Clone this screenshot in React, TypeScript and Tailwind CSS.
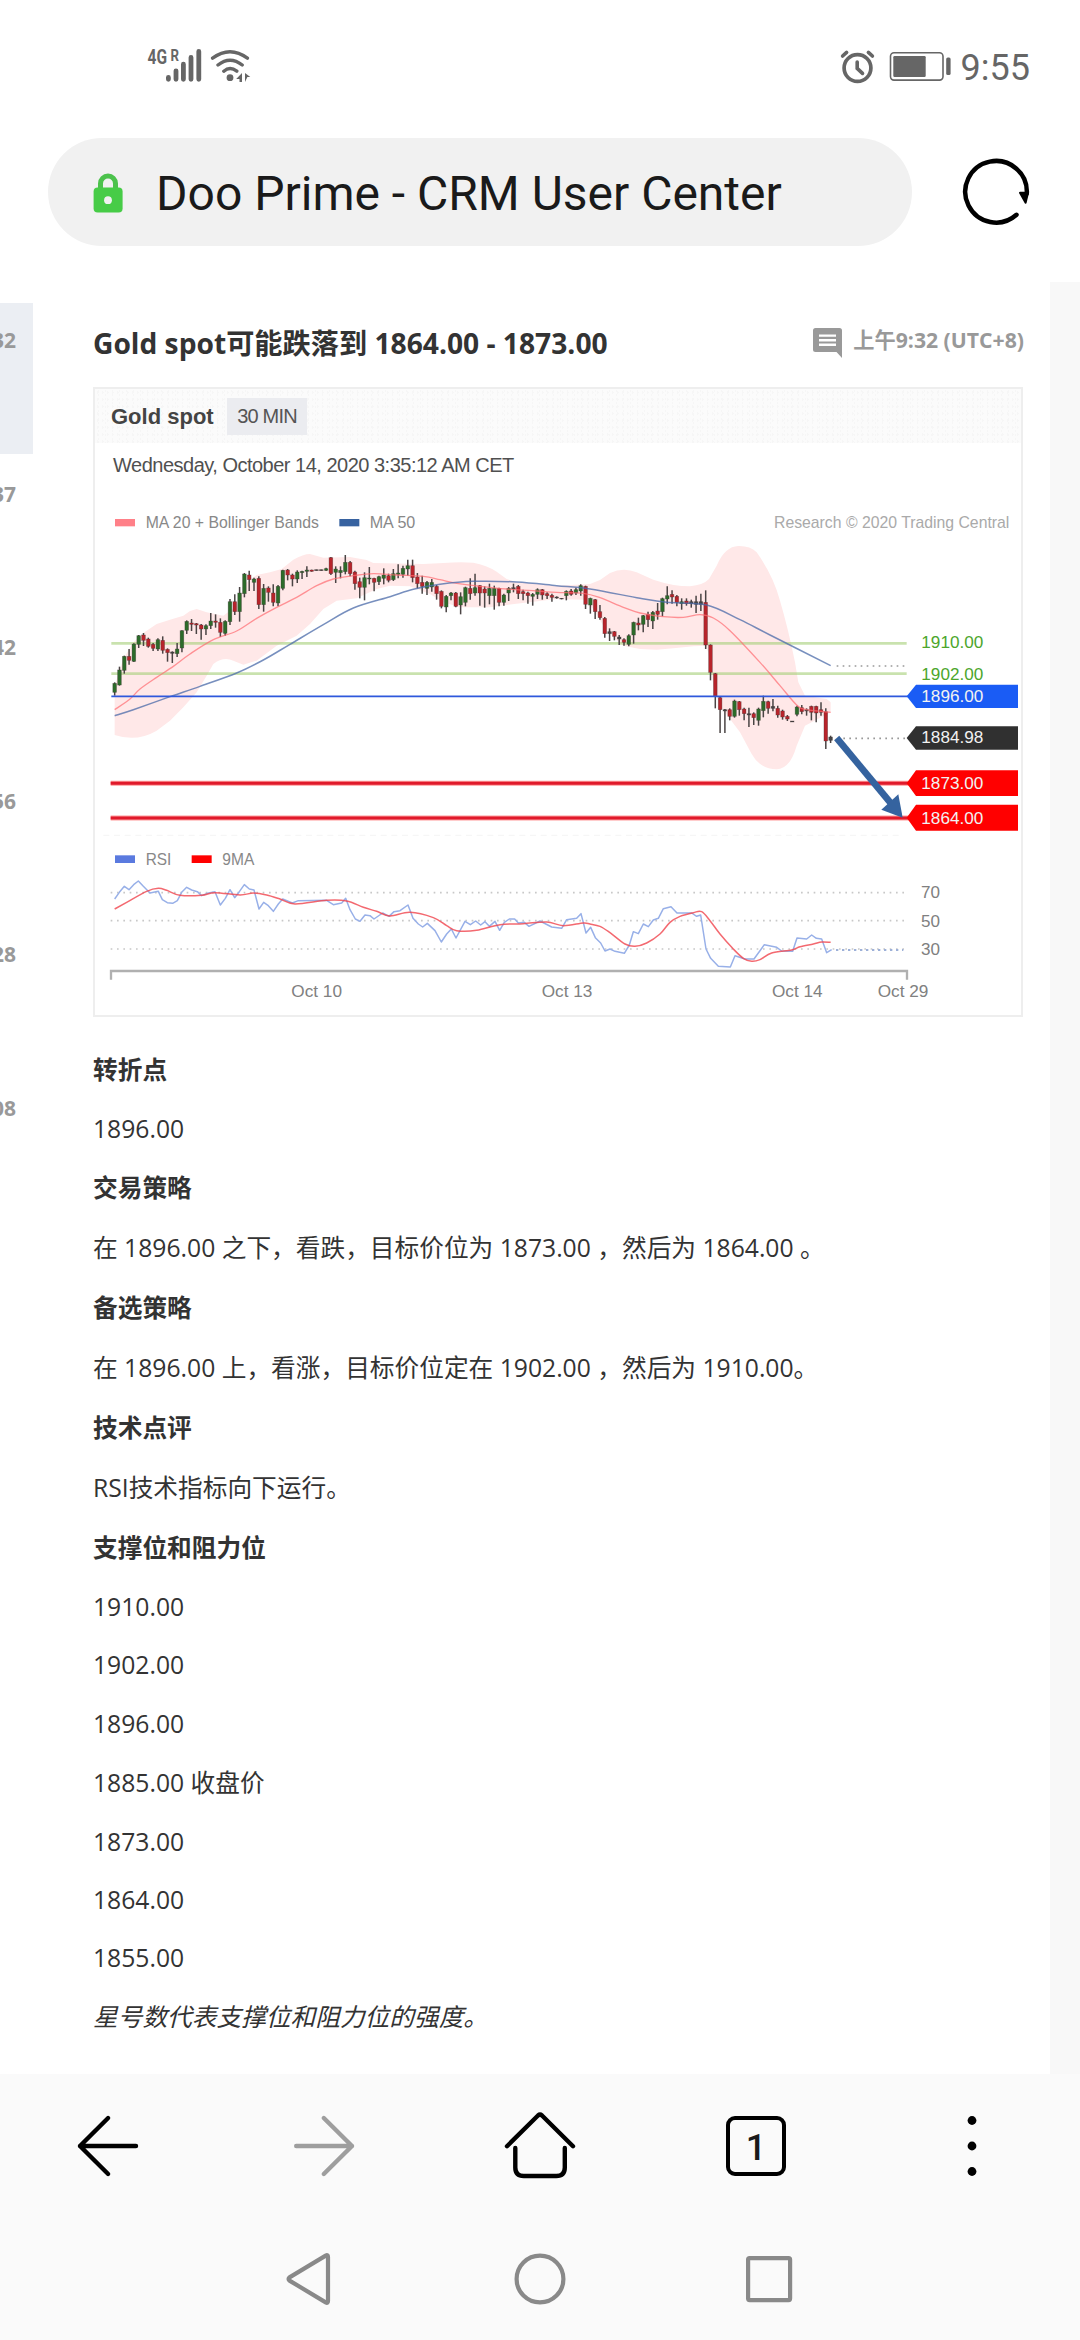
// NOTE: 行情分析ページ（モバイルブラウザ表示）

import clsx from "clsx";

type Candle = [high: number, top: number, bottom: number, low: number, type: string];
type Point = [x: number, y: number];

const CANDLE_STEP = 14.415;

// 30分足 [高値, 実体上, 実体下, 安値, 種別]
const candles: Candle[] = [
  [550, 553, 580, 590, "g"], [503, 513, 558, 560, "g"], [470, 472, 514, 524, "g"], [450, 472, 484, 497, "r"],
  [433, 435, 487, 489, "g"], [408, 410, 436, 447, "g"], [402, 408, 424, 441, "r"], [416, 420, 442, 446, "r"],
  [432, 436, 448, 456, "r"], [418, 422, 450, 456, "g"], [412, 424, 454, 464, "r"], [448, 451, 461, 488, "r"],
  [457, 459, 463, 492, "n"], [432, 450, 464, 474, "g"], [394, 395, 447, 460, "g"], [364, 367, 394, 405, "g"],
  [360, 372, 376, 396, "r"], [372, 374, 378, 405, "r"], [375, 378, 390, 422, "r"], [376, 380, 390, 408, "g"],
  [342, 366, 380, 390, "g"], [346, 366, 370, 386, "r"], [358, 370, 400, 414, "r"], [364, 367, 403, 410, "g"],
  [300, 308, 368, 378, "g"], [286, 308, 338, 348, "r"], [264, 282, 338, 368, "g"], [222, 225, 284, 295, "g"],
  [215, 228, 242, 276, "r"], [236, 240, 250, 276, "g"], [232, 238, 317, 330, "r"], [255, 268, 317, 338, "g"],
  [262, 267, 280, 308, "r"], [256, 282, 310, 322, "r"], [258, 262, 312, 322, "g"], [212, 214, 268, 274, "g"],
  [210, 213, 228, 244, "r"], [224, 228, 240, 262, "r"], [214, 219, 240, 252, "g"], [215, 217, 221, 240, "g"],
  [202, 213, 217, 234, "g"], [212, 213, 217, 218, "r"], [212, 212, 215, 215, "n"], [212, 212, 215, 215, "n"],
  [206, 209, 214, 216, "g"], [174, 176, 224, 228, "r"], [202, 210, 220, 252, "g"], [202, 214, 221, 238, "g"],
  [168, 190, 218, 226, "g"], [186, 190, 224, 232, "r"], [215, 219, 254, 272, "r"], [236, 248, 265, 298, "r"],
  [220, 236, 265, 304, "g"], [204, 237, 240, 256, "g"], [236, 238, 250, 277, "r"], [230, 233, 248, 258, "g"],
  [208, 228, 238, 256, "g"], [224, 230, 244, 250, "r"], [210, 224, 242, 246, "g"], [196, 222, 226, 238, "g"],
  [200, 208, 226, 236, "g"], [182, 200, 210, 230, "g"], [182, 200, 236, 250, "r"], [222, 234, 254, 268, "r"],
  [230, 250, 262, 284, "r"], [246, 250, 268, 288, "g"], [240, 250, 264, 278, "g"], [258, 262, 284, 302, "r"],
  [274, 277, 322, 328, "r"], [288, 292, 324, 340, "g"], [279, 282, 290, 304, "g"], [279, 282, 322, 325, "r"],
  [280, 293, 318, 346, "g"], [263, 266, 310, 322, "g"], [238, 268, 284, 302, "r"], [224, 266, 282, 290, "g"],
  [258, 260, 282, 320, "r"], [262, 270, 282, 326, "r"], [254, 268, 290, 316, "g"], [260, 268, 290, 332, "g"],
  [266, 268, 310, 322, "r"], [284, 288, 310, 320, "g"], [264, 268, 282, 306, "g"], [254, 266, 270, 280, "n"],
  [258, 262, 284, 300, "r"], [272, 278, 284, 304, "r"], [278, 282, 290, 314, "r"], [282, 286, 292, 320, "g"],
  [268, 272, 286, 300, "g"], [270, 272, 288, 302, "r"], [280, 284, 290, 300, "r"], [284, 289, 295, 308, "r"],
  [292, 294, 297, 299, "n"], [297, 298, 300, 301, "n"], [274, 277, 290, 304, "g"], [270, 276, 286, 290, "r"],
  [266, 272, 282, 288, "g"], [256, 260, 276, 290, "g"], [260, 262, 316, 330, "r"], [296, 298, 318, 344, "g"],
  [300, 302, 338, 360, "r"], [318, 338, 356, 362, "r"], [354, 358, 404, 416, "r"], [388, 398, 404, 426, "n"],
  [396, 398, 412, 424, "r"], [408, 414, 420, 438, "n"], [418, 422, 430, 440, "r"], [406, 410, 436, 442, "g"],
  [368, 370, 408, 434, "g"], [356, 372, 378, 394, "r"], [348, 350, 376, 400, "g"], [338, 346, 362, 384, "r"],
  [336, 340, 366, 390, "g"], [312, 336, 346, 362, "r"], [296, 299, 338, 352, "g"], [262, 290, 300, 316, "g"],
  [274, 286, 294, 314, "r"], [288, 292, 310, 322, "r"], [298, 308, 314, 332, "g"], [298, 306, 314, 320, "r"],
  [302, 308, 314, 326, "n"], [290, 308, 316, 342, "n"], [284, 308, 316, 336, "n"], [274, 310, 438, 450, "r"],
  [436, 438, 520, 544, "r"], [522, 524, 592, 628, "r"], [592, 596, 632, 702, "r"], [630, 632, 636, 702, "n"],
  [628, 632, 652, 664, "r"], [602, 606, 652, 656, "g"], [606, 608, 632, 650, "r"], [626, 630, 644, 664, "r"],
  [626, 644, 648, 684, "n"], [640, 644, 656, 678, "r"], [626, 630, 664, 680, "g"], [590, 607, 635, 655, "g"],
  [605, 608, 628, 644, "r"], [600, 622, 628, 637, "n"], [620, 628, 648, 656, "r"], [632, 636, 654, 662, "r"],
  [648, 652, 660, 666, "r"], [666, 666, 669, 669, "n"], [620, 624, 646, 652, "g"], [618, 626, 638, 646, "r"],
  [628, 632, 636, 650, "n"], [620, 622, 640, 664, "r"], [620, 622, 642, 670, "r"], [610, 632, 640, 650, "r"],
  [628, 638, 726, 750, "r"], [710, 714, 724, 732, "n"],
];

const candleColors: Record<string, string> = { g: "#2c6b2a", r: "#b8242b", n: "#444" };

const band =
  "M74 560L100 480L130 430L160 402L200 375L240 362L280 350L300 336L320 330L350 340L400 350L440 320L470 250L500 228L540 220L575 210L610 182Q640 165 660 165L700 176L780 174L830 183L850 192L1000 195L1060 192Q1110 188 1150 191Q1190 198 1220 218L1250 240L1280 250L1400 260L1500 255L1530 243L1560 222Q1600 204 1640 220L1690 242Q1750 262 1800 262Q1840 258 1857 240L1880 200Q1905 142 1945 141Q1980 140 2000 160Q2050 230 2070 305Q2095 390 2115 490L2125 550L2145 590L2210 600L2222 610L2222 640L2145 680L2120 740Q2100 810 2060 811Q2010 810 1985 765L1950 700L1920 660L1890 620L1870 560L1855 460L1847 440L1810 442L1750 448L1700 452L1650 450L1600 440L1570 415L1540 380L1510 330L1480 302L1400 300L1250 318L1200 325L1110 325L1060 310L1020 285L960 262L900 260L860 270L800 298L740 305L700 330L660 375L620 410L560 440L500 485L460 497L430 485Q400 472 370 495L350 530L320 580L280 625L240 665L200 695Q140 730 74 708Z";

const ma20: Point[] = [
  [74, 632], [120, 600], [150, 570], [200, 535], [250, 502], [300, 465], [370, 422], [440, 396], [500, 358],
  [560, 325], [620, 295], [680, 260], [730, 240], [790, 230], [850, 224], [920, 228], [1000, 232], [1050, 242],
  [1100, 253], [1170, 262], [1250, 270], [1340, 276], [1400, 280], [1480, 283], [1530, 296], [1600, 325],
  [1650, 342], [1720, 353], [1780, 355], [1830, 347], [1870, 357], [1920, 395], [2010, 490], [2070, 560],
  [2120, 618], [2150, 632], [2222, 640],
];

const ma50: Point[] = [
  [74, 650], [130, 632], [240, 593], [330, 562], [440, 522], [520, 483], [600, 436], [700, 377], [790, 327],
  [900, 293], [970, 271], [1050, 256], [1150, 247], [1280, 249], [1400, 260], [1500, 270], [1650, 298],
  [1730, 310], [1850, 318], [1950, 362], [2040, 408], [2222, 500],
];

const rsi =
  "74,180 88,160 103,142 117,152 131,137 145,126 160,142 180,162 205,157 217,182 232,191 248,193 262,185 275,160 290,145 305,153 322,158 335,170 352,163 375,158 391,198 406,178 420,152 434,176 448,158 463,137 478,150 492,153 507,210 521,190 535,200 550,217 565,195 578,180 607,192 625,185 710,184 730,197 755,192 767,178 780,212 796,240 810,247 825,228 840,230 852,240 878,222 897,232 912,218 930,215 954,198 969,238 985,255 998,264 1012,253 1035,275 1054,309 1070,285 1084,270 1098,297 1125,247 1141,257 1157,246 1172,258 1185,248 1198,262 1215,247 1229,274 1243,250 1258,240 1274,240 1285,252 1303,250 1317,262 1350,246 1385,264 1415,268 1430,242 1460,238 1473,224 1488,282 1502,265 1516,296 1532,312 1545,336 1560,330 1575,337 1603,343 1618,318 1630,278 1645,284 1660,255 1675,263 1690,243 1705,238 1720,209 1743,203 1761,222 1805,222 1820,232 1832,228 1848,330 1862,358 1885,382 1921,384 1935,350 1965,360 1992,360 2023,317 2060,325 2075,336 2108,337 2121,297 2150,300 2165,288 2179,298 2195,300 2210,341 2225,332";

const rsiMa: Point[] = [
  [74, 210], [110, 190], [170, 157], [205, 148], [230, 154], [270, 169], [335, 169], [375, 161], [450, 168],
  [490, 162], [530, 168], [570, 180], [615, 195], [710, 184], [770, 186], [820, 205], [860, 217], [900, 231],
  [960, 220], [1030, 236], [1070, 260], [1100, 275], [1160, 274], [1230, 257], [1300, 254], [1370, 249],
  [1420, 260], [1480, 252], [1500, 255], [1530, 262], [1560, 281], [1605, 315], [1635, 322], [1670, 312],
  [1710, 285], [1740, 250], [1770, 232], [1810, 221], [1835, 218], [1860, 245], [1890, 285], [1930, 330],
  [1960, 358], [1985, 367], [2010, 362], [2045, 342], [2105, 333], [2130, 323], [2170, 315], [2195, 309],
  [2222, 310],
];

// 右端の価格ラベル
const priceTags = [
  { price: "1896.00", top: 557, bottom: 627, baseline: 609, color: "#1a5cf5" },
  { price: "1884.98", top: 682, bottom: 752, baseline: 733, color: "#303030" },
  { price: "1873.00", top: 814, bottom: 891, baseline: 869, color: "#ff0000" },
  { price: "1864.00", top: 917, bottom: 995, baseline: 974, color: "#ff0000" },
];

const dates = [
  { label: "Oct 10", x: 604 },
  { label: "Oct 13", x: 1355 },
  { label: "Oct 14", x: 2046 },
  { label: "Oct 29", x: 2363 },
];

const sideTimes = ["32", "37", "42", "56", "28", "08"];

const rows = [
  { text: "转折点", bold: true },
  { text: "1896.00" },
  { text: "交易策略", bold: true },
  { text: "在 1896.00 之下，看跌，目标价位为 1873.00 ，然后为 1864.00 。" },
  { text: "备选策略", bold: true },
  { text: "在 1896.00 上，看涨，目标价位定在 1902.00 ，然后为 1910.00。" },
  { text: "技术点评", bold: true },
  { text: "RSI技术指标向下运行。" },
  { text: "支撑位和阻力位", bold: true },
  { text: "1910.00" },
  { text: "1902.00" },
  { text: "1896.00" },
  { text: "1885.00 收盘价" },
  { text: "1873.00" },
  { text: "1864.00" },
  { text: "1855.00" },
  { text: "星号数代表支撑位和阻力位的强度。", italic: true },
];

// 点列をなめらかな曲線にする
function smooth(points: Point[]) {
  let d = `M${points[0][0]} ${points[0][1]}`;
  for (let i = 0; i < points.length - 1; i++) {
    const p0 = points[i - 1] ?? points[i];
    const p1 = points[i];
    const p2 = points[i + 1];
    const p3 = points[i + 2] ?? p2;
    d += `C${p1[0] + (p2[0] - p0[0]) / 6} ${p1[1] + (p2[1] - p0[1]) / 6} ${p2[0] - (p3[0] - p1[0]) / 6} ${p2[1] - (p3[1] - p1[1]) / 6} ${p2[0]} ${p2[1]}`;
  }
  return d;
}

function StatusBar() {
  return (
    <div className="flex h-[138px] shrink-0 items-start justify-between pt-[44px] pr-[50px] pl-[144px]">
      <svg width="112" height="44" viewBox="144 44 112 44" fill="none" stroke="#666" strokeLinecap="round">
        <g fill="#666" stroke="none" fontFamily="Roboto, sans-serif" fontWeight="700">
          <text x="147.5" y="64" fontSize="20.5" textLength="19.5" lengthAdjust="spacingAndGlyphs">4G</text>
          <text x="170.5" y="61" fontSize="17" textLength="8.5" lengthAdjust="spacingAndGlyphs">R</text>
        </g>
        <path d="M168.4 77.5V79.3M176 70.8V79.3M183.4 64.2V79.3M191 57.5V79.3M198.8 51.5V79.3" strokeWidth="4.8" />
        <path d="M212.6 58.2Q230 45.4 247.4 58.2M218 65Q230 55.4 242.2 65M223.8 71.2Q230 66 236.8 71.2" strokeWidth="3.4" />
        <circle cx="230" cy="77.7" r="3.4" fill="#666" stroke="none" />
        <path d="M242 73V82H239.5V79H236.2ZM245 82V73L250.3 77H247.4Z" fill="#666" stroke="none" />
      </svg>
      <div className="flex items-start">
        <svg width="116" height="44" viewBox="838 44 116 44" fill="none" stroke="#666" strokeLinecap="round">
          <circle cx="856.5" cy="68" r="13.4" strokeWidth="3.7" />
          <path d="M841.6 56L845.6 52.4M867.4 52.4L871.4 56" strokeWidth="3.6" />
          <path d="M856.2 62V68.4L861.5 73.4" strokeWidth="3.6" />
          <rect x="889.5" y="52.7" width="52.5" height="27.4" rx="3.5" strokeWidth="1.6" />
          <rect x="892.3" y="56" width="32.4" height="21" rx="1.2" fill="#666" stroke="none" />
          <rect x="945.2" y="57.5" width="4.4" height="17.6" rx="1.6" fill="#666" stroke="none" />
        </svg>
        <span className="mt-px ml-[6px] font-[Roboto,sans-serif] text-[36px] leading-[46px] text-[#666]">9:55</span>
      </div>
    </div>
  );
}

function AddressBar() {
  return (
    <div className="flex h-[144px] shrink-0 items-start pl-[48px]">
      <div className="flex h-[108px] w-[864px] items-center rounded-full bg-[#f1f1f1] pl-[45px]">
        <svg width="30" height="41" viewBox="0 0 30 41">
          <path d="M7.5 18V11.5a7.5 7.5 0 0 1 15 0V18" fill="none" stroke="#4cc24c" strokeWidth="5" />
          <rect x="0.6" y="15.6" width="29" height="25" rx="4" fill="#47cc47" />
          <circle cx="15" cy="28.2" r="3.9" fill="#f1f1f1" />
        </svg>
        <span className="mt-[3px] ml-[33px] font-[Roboto,sans-serif] text-[48px] leading-[60px] whitespace-nowrap text-[#1a1a1a]">
          Doo Prime - CRM User Center
        </span>
      </div>
      <svg className="mt-[18px] ml-[48px]" width="72" height="72" viewBox="960 156 72 72">
        <path d="M1016.5 214.8A30.8 30.8 0 1 1 1026.8 193.5" fill="none" stroke="#000" strokeWidth="4.5" strokeLinecap="round" />
        <path d="M1020 192.8H1028L1025.6 202.8Z" stroke="#000" strokeWidth="2" strokeLinejoin="round" />
      </svg>
    </div>
  );
}

function PriceChart() {
  return (
    <svg
      className="block"
      width="927"
      height="526"
      viewBox="15 -30 2781 1578"
      fontFamily="'Liberation Sans', Arial, sans-serif"
      fontSize="51"
    >
      {/* 凡例 */}
      <rect x="75" y="60" width="60" height="22" fill="#ff8088" />
      <text x="167" y="88" textLength="520" lengthAdjust="spacingAndGlyphs" fill="#888">MA 20 + Bollinger Bands</text>
      <rect x="748" y="60" width="60" height="22" fill="#3762a0" />
      <text x="839" y="88" textLength="137" lengthAdjust="spacingAndGlyphs" fill="#888">MA 50</text>
      <text x="2052" y="88" textLength="706" lengthAdjust="spacingAndGlyphs" fill="#aaa">Research © 2020 Trading Central</text>

      {/* ボリンジャーバンド */}
      <path d={band} fill="#ffe8e8" />
      <g stroke="#a5cf78" strokeOpacity="0.6" strokeWidth="8">
        <path d="M64 433H2450" />
        <path d="M64 524H2450" />
      </g>

      {/* ローソク足 */}
      {candles.map(([high, top, bottom, low, type], i) => {
        const x = 74 + i * CANDLE_STEP;
        return (
          <g key={i}>
            <path d={`M${x} ${high}V${low}`} stroke="#4a4444" strokeWidth="4.5" />
            <rect x={x - 5.5} y={top} width="11" height={bottom - top} fill={candleColors[type]} stroke="#3d3030" strokeOpacity="0.45" strokeWidth="2" />
          </g>
        );
      })}

      <path d={smooth(ma20)} fill="none" stroke="#ff6b70" strokeOpacity="0.7" strokeWidth="4" />
      <path d={smooth(ma50)} fill="none" stroke="#4a6aa8" strokeOpacity="0.75" strokeWidth="4.5" />

      <path d="M64 592H2460" stroke="#2f58dc" strokeWidth="5" />
      <g stroke="#ff9a9a" strokeWidth="15">
        <path d="M62 853H2460M62 957H2460" />
      </g>
      <g stroke="#e01a2b" strokeWidth="9">
        <path d="M62 853H2460M62 957H2460" />
      </g>
      <g stroke="#999" strokeWidth="5" strokeDasharray="5 13">
        <path d="M2240 501H2446" />
        <path d="M2260 718H2446" />
      </g>
      <path d="M40 1009H2440" stroke="#f6f6f6" strokeWidth="4" strokeDasharray="18 14" />

      {/* 価格ラベル */}
      <text x="2494" y="448" textLength="186" lengthAdjust="spacingAndGlyphs" fill="#4ca62c">1910.00</text>
      <text x="2494" y="543" textLength="186" lengthAdjust="spacingAndGlyphs" fill="#4ca62c">1902.00</text>
      {priceTags.map((tag) => (
        <g key={tag.price}>
          <path
            d={`M2450 ${(tag.top + tag.bottom) / 2}L2478 ${tag.top}H2784V${tag.bottom}H2478Z`}
            fill={tag.color}
          />
          <text x="2494" y={tag.baseline} textLength="186" lengthAdjust="spacingAndGlyphs" fill="#f2f2f2">
            {tag.price}
          </text>
        </g>
      ))}

      {/* 予想方向の矢印 */}
      <path d="M2240 717L2402 912" stroke="#35639f" strokeWidth="20" />
      <path d="M2438 956L2374 932L2425 886Z" fill="#35639f" />

      {/* RSI */}
      <g transform="translate(0 1020)">
        <rect x="75" y="49" width="60" height="23" fill="#5a7adf" />
        <text x="167" y="78" textLength="77" lengthAdjust="spacingAndGlyphs" fill="#888">RSI</text>
        <rect x="305" y="49" width="60" height="23" fill="#ff0000" />
        <text x="397" y="78" textLength="96" lengthAdjust="spacingAndGlyphs" fill="#888">9MA</text>
        <g stroke="#c8c8c8" strokeWidth="5" strokeDasharray="5 14">
          <path d="M62 161H2452" />
          <path d="M62 245H2452" />
          <path d="M62 330H2452" />
        </g>
        <path d="M2238 333H2440" stroke="#9db0d8" strokeWidth="6" strokeDasharray="7 11" />
        <polyline points={rsi} fill="none" stroke="#98b0e8" strokeWidth="4.5" strokeLinejoin="round" />
        <path d={smooth(rsiMa)} fill="none" stroke="#f0444c" strokeOpacity="0.8" strokeWidth="4.5" />
        <path d="M63 422V396H2451V422" fill="none" stroke="#b0b0b0" strokeWidth="7" />
        <g fill="#808080">
          <text x="2493" y="178" textLength="57" lengthAdjust="spacingAndGlyphs">70</text>
          <text x="2493" y="263" textLength="57" lengthAdjust="spacingAndGlyphs">50</text>
          <text x="2493" y="347" textLength="57" lengthAdjust="spacingAndGlyphs">30</text>
          {dates.map((date) => (
            <text key={date.label} x={date.x} y="475" textLength="152" lengthAdjust="spacingAndGlyphs">
              {date.label}
            </text>
          ))}
        </g>
      </g>
    </svg>
  );
}

function ChartCard() {
  return (
    <div className="h-[630px] w-[930px] border-2 border-[#eeeeee] bg-white font-['Liberation_Sans',Arial,sans-serif]">
      <div className="flex h-[54px] items-center bg-[#fbfbfb] bg-[radial-gradient(#f6f6f6_1px,transparent_1px),radial-gradient(#f6f6f6_1px,transparent_1px)] bg-[size:5px_7px,7px_4px] pl-[16px]">
        <span className="w-[116px] text-[22px] font-bold whitespace-nowrap text-[#444]">Gold spot</span>
        <span className="flex h-[37px] w-[80px] items-center justify-center bg-[#ebecf0] text-[20px] tracking-[-0.8px] whitespace-nowrap text-[#555]">
          30 MIN
        </span>
      </div>
      <div className="h-[46px] pt-[9px] pl-[18px] text-[20px] leading-[26px] tracking-[-0.5px] whitespace-nowrap text-[#505050]">
        Wednesday, October 14, 2020 3:35:12 AM CET
      </div>
      <PriceChart />
    </div>
  );
}

function Article() {
  return (
    <div className="flex w-[1017px] flex-col pl-[60px] font-['Open_Sans','Noto_Sans_CJK_SC',sans-serif] text-[#333]">
      <div className="flex h-[105px] w-[931px] items-start justify-between pt-[41px]">
        <h1 className="text-[28.2px] leading-[40px] font-bold whitespace-nowrap">Gold spot可能跌落到 1864.00 - 1873.00</h1>
        <div className="flex items-start text-[#999]">
          <svg className="mt-[5px] mr-[11px]" width="29" height="30" viewBox="0 0 29 30">
            <path d="M2.5 0H26.5Q29 0 29 2.5V30L23.5 24H2.5Q0 24 0 21.5V2.5Q0 0 2.5 0Z" fill="#999" />
            <path d="M6 7.6H23M6 12.2H23M6 16.8H23" stroke="#fff" strokeWidth="2.4" />
          </svg>
          <span className="text-[21.2px] leading-[34px] font-bold whitespace-nowrap">上午9:32 (UTC+8)</span>
        </div>
      </div>
      <ChartCard />
      <div className="flex flex-col pt-[23px]">
        {rows.map((row, i) => (
          <p
            key={i}
            className={clsx(
              "flex shrink-0 items-center text-[24.7px] leading-[34px] whitespace-nowrap",
              /^[\d.]+$/.test(row.text) ? "h-[58.2px]" : "h-[60px]",
              row.bold && "font-bold",
              row.italic && "italic"
            )}
          >
            {row.text}
          </p>
        ))}
      </div>
    </div>
  );
}

function BrowserNav() {
  return (
    <div className="flex h-[144px] items-center pl-[76px]">
      <svg width="64" height="64" viewBox="76 2114 64 64" fill="none" stroke="#000" strokeWidth="4.4" strokeLinecap="round" strokeLinejoin="round">
        <path d="M136 2146H80M108.1 2118L80 2146L108.1 2174" />
      </svg>
      <svg className="ml-[152px]" width="64" height="64" viewBox="292 2114 64 64" fill="none" stroke="#9e9e9e" strokeWidth="4.4" strokeLinecap="round" strokeLinejoin="round">
        <path d="M296.2 2146H352M323.8 2118L352 2146L323.8 2174" />
      </svg>
      <svg className="ml-[148px]" width="72" height="72" viewBox="504 2110 72 72" fill="none" stroke="#000" strokeWidth="4.4" strokeLinecap="round" strokeLinejoin="round">
        <path d="M507 2146.2L538 2115.5Q540 2113.8 542 2115.5L573 2146.2" />
        <path d="M515.3 2148V2167.5Q515.3 2176 523.8 2176H556.3Q564.8 2176 564.8 2167.5V2148" />
      </svg>
      <div className="ml-[150px] flex size-[60px] items-center justify-center rounded-[9px] border-[4.5px] border-black pt-[3px] font-[Roboto,sans-serif] text-[36px] leading-none font-medium text-[#1a1a1a]">
        1
      </div>
      <svg className="ml-[176px]" width="20" height="64" viewBox="962 2114 20 64">
        <circle cx="972" cy="2120.5" r="4.4" />
        <circle cx="972" cy="2146" r="4.4" />
        <circle cx="972" cy="2171.5" r="4.4" />
      </svg>
    </div>
  );
}

function SystemNav() {
  return (
    <div className="flex h-[122px] items-center justify-between pr-[286px] pl-[284px]">
      <svg width="52" height="56" viewBox="284 2251 52 56" fill="none" stroke="#898989" strokeWidth="4.2" strokeLinejoin="round">
        <path d="M289.5 2277.4L325.7 2255.6Q328 2254.4 328 2257V2301Q328 2303.6 325.7 2302.4L289.5 2280.6Q287.6 2279 289.5 2277.4Z" />
      </svg>
      <svg width="56" height="56" viewBox="512 2251 56 56" fill="none" stroke="#898989" strokeWidth="4.2">
        <circle cx="540" cy="2279" r="23.4" />
      </svg>
      <svg width="50" height="50" viewBox="744 2254 50 50" fill="none" stroke="#898989" strokeWidth="4.2">
        <rect x="748.1" y="2258.1" width="42" height="42" rx="1.5" />
      </svg>
    </div>
  );
}

export default function App() {
  return (
    <div className="flex h-[2340px] w-[1080px] flex-col overflow-hidden bg-white">
      <StatusBar />
      <AddressBar />

      <main className="flex h-[1792px] shrink-0 overflow-hidden">
        {/* 左の一覧（時刻だけ見えている） */}
        <div className="flex w-[33px] shrink-0 flex-col gap-[2.6px] overflow-hidden pt-[21px]">
          {sideTimes.map((time, i) => (
            <div
              key={time}
              className={clsx(
                "flex h-[151px] shrink-0 justify-end pt-[22px] pr-[17px] font-['Open_Sans',sans-serif] text-[21px] leading-[30px] font-bold text-[#999]",
                i === 0 && "bg-[#ebeef3]"
              )}
            >
              {time}
            </div>
          ))}
        </div>
        <Article />
        <div className="flex-1 bg-[#f8f8f8]" />
      </main>

      <footer className="flex flex-1 flex-col bg-[#fafafa]">
        <BrowserNav />
        <SystemNav />
      </footer>
    </div>
  );
}
